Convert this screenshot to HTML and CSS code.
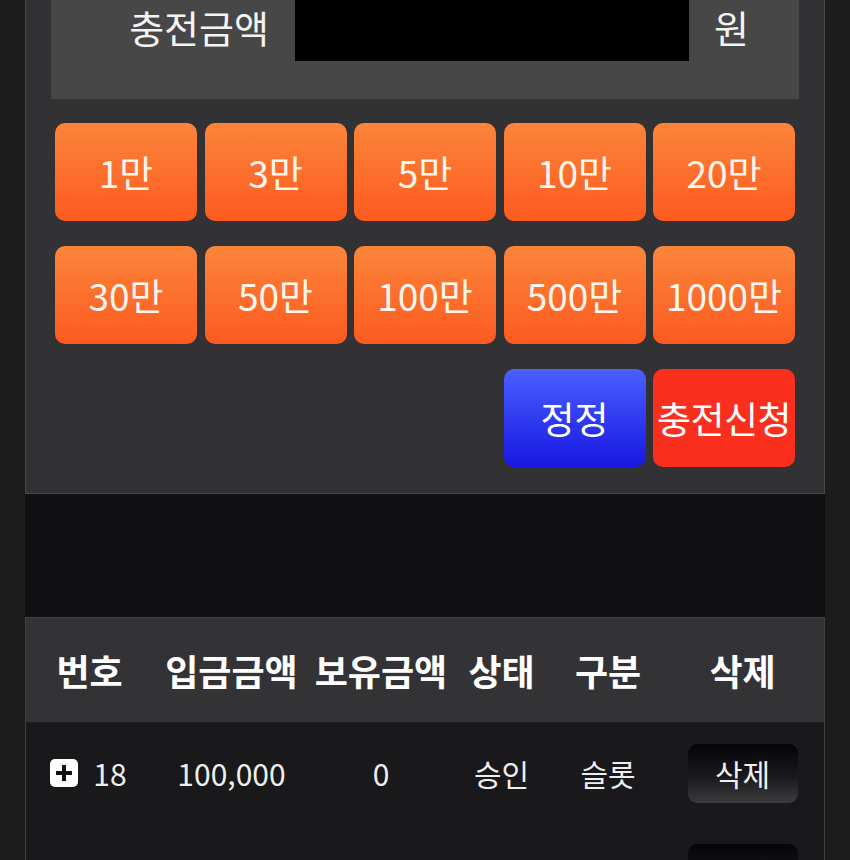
FILE: index.html
```html
<!DOCTYPE html>
<html lang="ko">
<head>
<meta charset="utf-8">
<title>충전신청</title>
<link rel="stylesheet" href="styles.css">
</head>
<body>
<div class="wrap">
  <section class="charge">
    <div class="amount-panel">
      <label class="amount-label">충전금액</label>
      <div class="amount-input"></div>
      <span class="amount-unit">원</span>
    </div>
    <div class="btn-grid">
      <button class="btn btn-orange">1만</button>
      <button class="btn btn-orange">3만</button>
      <button class="btn btn-orange">5만</button>
      <button class="btn btn-orange">10만</button>
      <button class="btn btn-orange">20만</button>
      <button class="btn btn-orange">30만</button>
      <button class="btn btn-orange">50만</button>
      <button class="btn btn-orange">100만</button>
      <button class="btn btn-orange">500만</button>
      <button class="btn btn-orange">1000만</button>
      <button class="btn btn-blue col-4">정정</button>
      <button class="btn btn-red">충전신청</button>
    </div>
  </section>
  <div class="spacer"></div>
  <section class="history">
    <div class="row head">
      <div>번호</div>
      <div>입금금액</div>
      <div>보유금액</div>
      <div>상태</div>
      <div>구분</div>
      <div>삭제</div>
    </div>
    <div class="row item">
      <div class="num"><span class="plus"></span>18</div>
      <div>100,000</div>
      <div>0</div>
      <div>승인</div>
      <div>슬롯</div>
      <div><button class="del">삭제</button></div>
    </div>
    <div class="row item">
      <div></div>
      <div></div>
      <div></div>
      <div></div>
      <div></div>
      <div><button class="del" aria-label="삭제"></button></div>
    </div>
  </section>
</div>
</body>
</html>
```

FILE: styles.css
```css
html, body {
  margin: 0;
  padding: 0;
  background: #1c1c1c;
  font-family: "Noto Sans CJK KR", "Noto Sans", sans-serif;
  color: #f2f2f2;
  overflow: hidden;
}

.wrap {
  width: 800px;
  margin: -60px auto 0;
  background: #111013;
}

.charge {
  background: #323234;
  border: 1px solid #484848;
  padding: 0 0 26px;
}

.amount-panel {
  margin: 0 25px;
  background: #474747;
  display: flex;
  align-items: flex-end;
  padding: 20px 0 38px;
}

.amount-label {
  width: 218px;
  text-align: right;
  font-size: 38px;
  line-height: 52px;
  margin-bottom: 8px;
  color: #f4f4f4;
}

.amount-input {
  width: 394px;
  height: 100px;
  margin-left: 26px;
  background: #000;
}

.amount-unit {
  margin-left: 25px;
  font-size: 38px;
  line-height: 52px;
  margin-bottom: 8px;
  color: #f4f4f4;
}

.btn-grid {
  margin: 24px 28px 0 29px;
  display: grid;
  grid-template-columns: repeat(5, 142px);
  column-gap: 7.5px;
  row-gap: 25px;
}

.btn {
  height: 98px;
  border: none;
  border-radius: 10px;
  padding: 0;
  font-family: inherit;
  font-size: 37px;
  color: #fff6ee;
  white-space: nowrap;
  overflow: visible;
}

.btn-orange {
  background: linear-gradient(to bottom, #fb853a, #fd5a1f);
}

.btn-blue {
  background: linear-gradient(to bottom, #4a60ff, #1717e2);
  color: #fff;
}

.btn-red {
  background: #fa2f1d;
  color: #fff;
  letter-spacing: -0.5px;
}

.col-4 {
  grid-column: 4;
}

.spacer {
  height: 123px;
}

.history {
  border: 1px solid #404042;
  border-bottom: none;
  background: #19181a;
}

.row {
  display: grid;
  grid-template-columns: 127px 157px 142px 99px 114px 155px;
  align-items: center;
  text-align: center;
}

.head {
  height: 104px;
  background: #333335;
  font-size: 36px;
  font-weight: 700;
  color: #fff;
  border-bottom: 1px solid #202022;
}

.item {
  height: 100px;
  font-size: 30px;
  color: #eeeeee;
}

.num {
  display: flex;
  align-items: center;
  justify-content: center;
}

.plus {
  position: relative;
  width: 28px;
  height: 28px;
  border-radius: 5px;
  background: #fff;
  margin-right: 15px;
  margin-left: -2px;
}

.plus::before,
.plus::after {
  content: "";
  position: absolute;
  background: #111;
  left: 50%;
  top: 50%;
  transform: translate(-50%, -50%);
}

.plus::before {
  width: 16px;
  height: 4px;
}

.plus::after {
  width: 4px;
  height: 16px;
}

.del {
  display: block;
  margin: 0 auto;
  width: 110px;
  height: 59px;
  border: none;
  border-radius: 9px;
  background: linear-gradient(to bottom, #040305 0%, #1a191c 55%, #3b3a3d 100%);
  color: #f0f0f0;
  font-family: inherit;
  font-size: 30px;
  padding: 0;
}
```
